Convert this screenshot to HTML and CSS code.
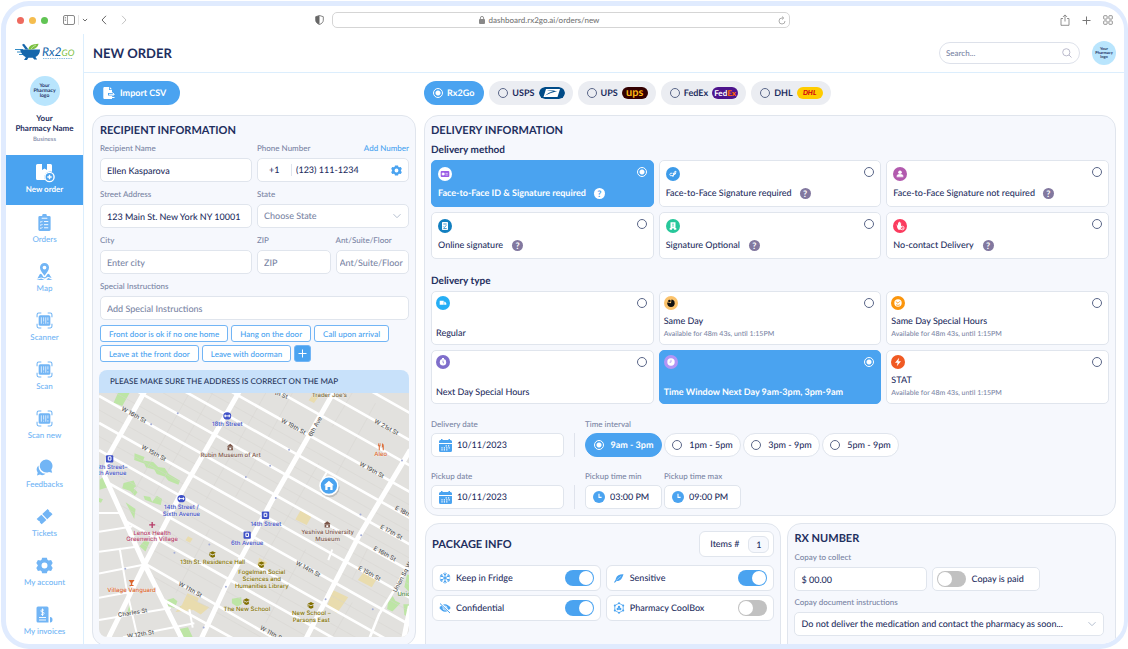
FILE: index.html
```html
<!DOCTYPE html>
<html lang="en">
<head>
<meta charset="utf-8">
<meta name="viewport" content="width=device-width, initial-scale=1">
<title>Rx2Go – New order</title>
<link rel="stylesheet" href="styles.css">
</head>
<body>
<svg class="defs" aria-hidden="true">
  <symbol id="scan" viewBox="0 0 16 16"><path d="M1 5V2.500Q1 1 2.500 1H5M11 1h2.500Q15 1 15 2.500V5M15 11v2.500q0 1.500-1.500 1.500H11M5 15H2.500Q1 15 1 13.500V11" fill="none" stroke="currentColor"/><rect x="2.500" y="3" width="11" height="10" rx="1.500" fill="currentColor"/><path d="M5 5v6M7.200 5v4M9.200 5v6M11.200 5v3M11.200 9.500V11M7.200 10v1" stroke="#fff" stroke-width=".7"/></symbol>
  <symbol id="gear" viewBox="0 0 16 16"><path fill="currentColor" fill-rule="evenodd" d="M5.800.6h4.400l.7 2.200 1.100.6 2.200-.5 1.500 2.700L14.200 8l1.500 2.400-1.500 2.700-2.200-.5-1.100.6-.7 2.200H5.800l-.7-2.200-1.100-.6-2.200.5-1.500-2.700L1.800 8 .3 5.600l1.500-2.700 2.200.5 1.100-.6zM8 5.200a2.800 2.800 0 1 0 0 5.600 2.800 2.800 0 0 0 0-5.600z"/></symbol>
  <symbol id="calendar" viewBox="0 0 13 13"><path fill="#4aa3f0" d="M1.500 1H2V0h1.500v1h6V0H11v1h.5A1.500 1.500 0 0 1 13 2.500V4H0V2.500A1.500 1.500 0 0 1 1.500 1zM0 5h13v6.500a1.500 1.500 0 0 1-1.500 1.500h-10A1.500 1.500 0 0 1 0 11.500z"/><path stroke="#fff" stroke-width="1.200" stroke-dasharray="1.200 1.200" d="M6.600 6.800h4.600M2.400 8.800h8.800M2.400 10.800h6"/></symbol>
  <symbol id="clock" viewBox="0 0 12 12"><circle cx="6" cy="6" r="6" fill="#4aa3f0"/><path d="M6 2.800V6.400h2.600" fill="none" stroke="#fff" stroke-width="1.100"/></symbol>
  <symbol id="chevron" viewBox="0 0 10 10"><path d="M1.500 3.200 5 6.700l3.500-3.500" fill="none" stroke="currentColor"/></symbol>
</svg>

<div class="window">
  <div class="titlebar">
    <div class="lights"><i class="red"></i><i class="yellow"></i><i class="green"></i></div>
    <div class="bar-tools">
      <svg width="12" height="10" viewBox="0 0 12 10"><rect x=".5" y=".5" width="11" height="9" rx="1.500" fill="none" stroke="#888"/><path d="M4.500 1v8M1.700 2.500h1.400M1.700 4h1.400M1.700 5.500h1.400" stroke="#888" stroke-width=".8"/></svg>
      <i class="bar-line"></i>
      <svg width="6" height="6" viewBox="0 0 10 10"><path d="M1.500 3.200 5 6.700l3.500-3.500" fill="none" stroke="#666" stroke-width="1.600"/></svg>
    </div>
    <div class="bar-nav">
      <svg width="8" height="10" viewBox="0 0 8 10"><path d="M6 .8 2 5l4 4.200" fill="none" stroke="#666"/></svg>
      <svg width="8" height="10" viewBox="0 0 8 10"><path d="m2 .8 4 4.200-4 4.200" fill="none" stroke="#c4c4c4"/></svg>
    </div>
    <div class="bar-center">
      <svg width="9" height="10" viewBox="0 0 9 10"><path d="M4.500.5 8.300 1.700v3.500c0 2-1.600 3.500-3.800 4.300C2.300 8.700.7 7.200.7 5.200V1.700z" fill="#fff" stroke="#666" stroke-width=".8"/><path d="M4.500.5v9C2.300 8.700.7 7.200.7 5.200V1.700z" fill="#666"/></svg>
      <div class="address">
        <span class="address-text"><svg width="6" height="8" viewBox="0 0 6 8"><rect y="3" width="6" height="5" rx="1" fill="#888"/><path d="M1.400 3.500V2a1.600 1.600 0 0 1 3.200 0v1.500" fill="none" stroke="#888" stroke-width=".9"/></svg>dashboard.rx2go.ai/orders/new</span>
        <svg width="8" height="9" viewBox="0 0 8 9"><path d="M7 5a3 3 0 1 1-3-3h1.500M4 .5 5.700 2 4 3.600" fill="none" stroke="#999" stroke-width=".8"/></svg>
      </div>
    </div>
    <div class="bar-right">
      <svg width="10" height="12" viewBox="0 0 10 12"><path d="M3 4.500H1v6.800h8V4.500H7M5 7.500V1M2.900 3 5 .9 7.100 3" fill="none" stroke="#777" stroke-width=".8"/></svg>
      <svg width="9" height="9" viewBox="0 0 9 9"><path d="M4.500.5v8M.5 4.500h8" stroke="#777"/></svg>
      <svg width="10" height="10" viewBox="0 0 10 10" fill="none" stroke="#777" stroke-width=".8"><rect x=".7" y=".7" width="3.400" height="3.400" rx=".6"/><rect x="5.900" y=".7" width="3.400" height="3.400" rx=".6"/><rect x=".7" y="5.900" width="3.400" height="3.400" rx=".6"/><rect x="5.900" y="5.900" width="3.400" height="3.400" rx=".6"/></svg>
    </div>
  </div>

  <div class="app">
    <aside class="sidebar">
      <svg class="logo" viewBox="0 0 62 18" role="img" aria-label="Rx2Go">
        <path d="M1 6.500h8M3 9h6M5 11.500h5" stroke="#1c7fc0" stroke-width=".9"/>
        <path d="M6 6.500h20c0 3.500-1.500 6-4.500 7.600l1.700 2.400h-3l-1.400-1.700h-4.400L13 17h-3l1.800-2.800C8.500 12.800 7.200 9.800 6 6.500z" fill="#1667ab"/>
        <path d="m8 1.800 2-1 4.500 5.700h-3z" fill="#1667ab"/>
        <path d="M14.500 6.500C14.500 3 18 1 24.500.8 24 4 21 6.500 17 6.500z" fill="#7cc142"/><path d="M17 6q2-3 5-4" stroke="#fff" stroke-width=".5" fill="none"/>
        <text x="28" y="13" class="logo-rx">Rx2<tspan class="logo-go">GO</tspan></text>
        <path d="M29 15.500h30" stroke="#7ab3dd" stroke-width=".9" stroke-dasharray="1.400 .9"/>
      </svg>
      <div class="avatar avatar-side">Your Pharmacy logo</div>
      <strong class="pharmacy">Your<br>Pharmacy Name</strong>
      <span class="plan">Business</span>
      <nav class="nav">
        <a href="#" class="nav-item active"><svg viewBox="0 0 20 20"><path fill="#fff" d="M2.500 1H7v6l2.500-1.500L12 7V1h3.500A1.500 1.500 0 0 1 17 2.500v6.300a5.700 5.700 0 0 0-6.800 8.200H2.500A1.500 1.500 0 0 1 1 15.500v-13A1.500 1.500 0 0 1 2.500 1z"/><circle cx="14.500" cy="14" r="4.600" fill="none" stroke="#fff" stroke-width="1.400"/><path d="M14.500 11.800v4.400M12.300 14h4.400" stroke="#fff" stroke-width="1.400"/></svg>New order</a>
        <a href="#" class="nav-item"><svg viewBox="0 0 16 18"><path fill="currentColor" d="M3 2h2.500a2.500 2.500 0 0 1 5 0H13a1.500 1.500 0 0 1 1.500 1.500v13A1.500 1.500 0 0 1 13 18H3a1.500 1.500 0 0 1-1.500-1.500v-13A1.500 1.500 0 0 1 3 2z"/><path d="M5 4.500h6M7.500 8h4.500M7.500 11.300h4.500M7.500 14.600h4.500M3.400 8l.9.900 1.500-1.600M3.400 11.300l.9.900 1.500-1.600M3.400 14.600l.9.900 1.500-1.600" fill="none" stroke="#fff"/></svg>Orders</a>
        <a href="#" class="nav-item"><svg viewBox="0 0 18 18"><path fill="currentColor" fill-rule="evenodd" d="M9 0a4.800 4.800 0 0 1 4.800 4.800C13.800 8 11 10.500 9 13.500 7 10.500 4.200 8 4.200 4.800A4.800 4.800 0 0 1 9 0zm0 2.800a2 2 0 1 0 0 4 2 2 0 0 0 0-4z"/><path fill="currentColor" d="M4.300 11.500 6 12l2 3h2l2-3 1.700-.5L16.500 16l-4-1.500-3 2-4-1.200-4 1.200zM.5 18l5-1.500L9 18zM11 17.700l2-1.700 4.500 2z"/></svg>Map</a>
        <a href="#" class="nav-item"><svg><use href="#scan"/></svg>Scanner</a>
        <a href="#" class="nav-item"><svg><use href="#scan"/></svg>Scan</a>
        <a href="#" class="nav-item"><svg><use href="#scan"/></svg>Scan new</a>
        <a href="#" class="nav-item"><svg viewBox="0 0 17 17"><path fill="currentColor" d="M10 .5a6.500 6.500 0 0 1 5.300 10.200l.9 3-3.200-.8A6.500 6.500 0 1 1 10 .5z"/><path fill="currentColor" d="M2.600 6.500a7.400 7.400 0 0 0 6.900 8.300A5 5 0 0 1 4 15.600l-3 .9.700-3a5 5 0 0 1 .9-7z"/></svg>Feedbacks</a>
        <a href="#" class="nav-item"><svg viewBox="0 0 18 18"><path fill="currentColor" d="m12.300 1 1.800 1.900q-.4 1.700 1.400 1.700L17.500 6.600l-5.600 5.200-5.300-5.400zM5.700 7.200l5.300 5.400-5 4.600-1.900-1.900q.5-1.800-1.500-1.800L.7 11.700z"/></svg>Tickets</a>
        <a href="#" class="nav-item"><svg><use href="#gear"/></svg>My account</a>
        <a href="#" class="nav-item"><svg viewBox="0 0 17 17"><path fill="currentColor" d="M2 .5h9a1.500 1.500 0 0 1 1.500 1.500v14.500H2A1.500 1.500 0 0 1 .5 15V2A1.500 1.500 0 0 1 2 .5zM14 16.500V11q2.500 0 2.500 2.800T14 16.500z"/><path d="M8 4.200Q5 3 5 4.700T6.600 6.200 8 7.700 5 8.200M6.500 2.500V10M3 11.500h7M3 14h7" fill="none" stroke="#fff" stroke-width=".9"/></svg>My invoices</a>
      </nav>
    </aside>

    <div class="page">
      <header class="header">
        <h1>NEW ORDER</h1>
        <label class="search"><input type="search" placeholder="Search..." aria-label="Search"><svg width="10" height="10" viewBox="0 0 10 10"><circle cx="4.300" cy="4.300" r="3.600" fill="none" stroke="#bbc"/><path d="m7 7 2.500 2.500" stroke="#bbc"/></svg></label>
        <div class="avatar avatar-head">Your Pharmacy logo</div>
      </header>

      <main class="main">
        <section class="column">
          <div class="toolbar"><button type="button" class="import"><svg width="12" height="12" viewBox="0 0 12 12"><path fill="#fff" d="M1.500 0H6v3h3v3H5v2.500h4V12H1.500A1.200 1.200 0 0 1 .3 10.800V1.200A1.200 1.200 0 0 1 1.500 0zM6.800 0 9 2.300H6.800z"/><path d="M6 7.300h5M9.200 5.300l2 2-2 2M8 10.500h3.500" stroke="#fff" fill="none"/></svg>Import CSV</button></div>
          <form class="card recipient">
            <h2>RECIPIENT INFORMATION</h2>
            <div class="fields">
              <div class="field half"><label for="name">Recipient Name</label><input class="box" id="name" value="Ellen Kasparova"></div>
              <div class="field half">
                <div class="label-row"><label for="phone">Phone Number</label><a href="#">Add Number</a></div>
                <div class="box phone"><span class="code">+1</span><input id="phone" value="(123) 111-1234"><svg width="11" height="11" color="#4aa3f0"><use href="#gear"/></svg></div>
              </div>
              <div class="field half"><label for="street">Street Address</label><input class="box" id="street" value="123 Main St. New York NY 10001"></div>
              <div class="field half"><label for="state">State</label><div class="box select muted"><select id="state"><option>Choose State</option></select><svg width="10" height="10"><use href="#chevron"/></svg></div></div>
              <div class="field half"><label for="city">City</label><input class="box" id="city" placeholder="Enter city"></div>
              <div class="field"><label for="zip">ZIP</label><input class="box" id="zip" placeholder="ZIP"></div>
              <div class="field"><label for="apt">Ant/Suite/Floor</label><input class="box" id="apt" placeholder="Ant/Suite/Floor"></div>
              <div class="field full"><label for="special">Special Instructions</label><input class="box" id="special" placeholder="Add Special Instructions"></div>
            </div>
            <div class="chips">
              <button type="button">Front door is ok if no one home</button><button type="button">Hang on the door</button><button type="button">Call upon arrival</button><button type="button">Leave at the front door</button><button type="button">Leave with doorman</button><button type="button" class="add" aria-label="Add instruction"><svg width="9" height="9" viewBox="0 0 9 9"><path d="M4.500.5v8M.5 4.500h8" stroke="#fff"/></svg></button>
            </div>
            <div class="map">
              <p>PLEASE MAKE SURE THE ADDRESS IS CORRECT ON THE MAP</p>
              <svg viewBox="18 9 933 735" preserveAspectRatio="xMidYMid slice">
                <defs><clipPath id="grid"><path d="M18-50H960V760H270L155 525 35 260 18 240z"/></clipPath></defs>
                <rect x="0" y="0" width="970" height="760" fill="#e2e1de"/>
                <g fill="#bde5a5">
                  <path d="M75 9h35L88 48 62 38z"/><path d="m125 190 30 12-4 10 30 5 15 15 20 3 12 18 34 20-5 12-30-12-10-12-25-8-8-14-24-6-6-12-30-10z"/><path d="m92 280 30-8 8 18-8 6 12 12-8 10-14-14-24-8zM152 318l20 4 6 14 14-18 16 10-4 18-22-6-26-10zM98 338l30 20-4 30zM18 325l12 4-6 10-6-2zM20 270l12-10 14 32-26 8zM140 470l15-18 15 6-12 28zM222 632l20-6 12 10-8 20-20-6zM260 650h28l-14 16zM256 720l30-6 14 30h-34zM418 628l28-4 2 20-14 8-16-10zM110 645l8 24-16 6zM945 555l6 2v50l-14-14zM888 640l14-20 8 14 15 8-24 25-16-8zM934 645h17v40l-14-8z"/>
                </g>
                <g fill="#e9dcae">
                  <path d="m625 362 34 16-16 28-34-16zM722 602l46 22-34 48-30-20zM815 548l38 22-14 24-42-22zM284 612l34 14-4 12 36 16-26 22-22-14-54 6 20-22zM286 440l14 8-8 12-14-8zM500 505l24 14-16 18-14-10zM665 9l20 2-20 28-16-8z"/>
                </g>
                <g stroke="#d6d5d1" stroke-width="1.500" clip-path="url(#grid)">
                  <path d="m18-180 933 525M18-100l933 525M18-20l933 525M18 60l933 525M18 140l933 525M18 225l933 525M18 310l800 450M18 390l660 371M18 470l500 281M290 9 118 315M360 9 185 315M520 9 340 330M600 9 430 320M680 220 500 530M850 40 690 330M780 9 720 110M640 480 520 700M350 420 250 610M830 470 780 570M780 640 720 744"/>
                </g>
                <g stroke="#fff" stroke-width="8" fill="none">
                  <g clip-path="url(#grid)"><path d="m18-457 950 534M18-375l950 534M18-299l950 534M18-219l950 534M18-141l950 534M18-61l950 534M18 18l950 534M18 99l950 534M18 181l950 534M18 264l870 489M18 350l720 405M155 522l390 225M200 625l220 122"/></g>
                  <path stroke-width="6" d="M18 370h62M18 427l100-16M18 487l112-15M18 552l137-27M18 625l110-20M18 692l216-36M90 744l215-42M80 475l22 130 32 139M290 660l10 55M705 245 690 270M720 480l-12 32"/>
                  <path d="m951 520-40 75-50 80-28 70"/>
                </g>
                <g stroke="#fff" stroke-width="15" fill="none"><path d="M155 5 48 195 35 260 155 525 268 750M440 5 265 310 155 525 45 750M725 5 540 330 400 590 325 750M955 180 800 440 640 750M955 650l-20 100"/></g>
                <g fill="#a3add8"><circle cx="255" cy="70" r="3"/><circle cx="590" cy="180" r="3"/><circle cx="460" cy="262" r="3"/><circle cx="550" cy="325" r="3"/><circle cx="245" cy="490" r="3"/><circle cx="350" cy="465" r="3"/><circle cx="400" cy="592" r="3"/><circle cx="533" cy="228" r="3"/><circle cx="807" cy="437" r="3"/><circle cx="700" cy="630" r="3"/><circle cx="333" cy="715" r="3"/><circle cx="842" cy="660" r="3"/><circle cx="97" cy="538" r="3"/><circle cx="175" cy="103" r="3"/><circle cx="805" cy="375" r="3"/><circle cx="930" cy="212" r="3"/></g>
                <g class="street">
                  <text transform="translate(120 80) rotate(29)">W 16th St</text><text transform="translate(180 195) rotate(29)">W 15th St</text><text transform="translate(600 115) rotate(29)">W 19th St</text><text transform="translate(880 117) rotate(29)">W 21st St</text><text transform="translate(836 246) rotate(29)">W 19th St</text><text transform="translate(674 113) rotate(-61)">6th Ave</text><text transform="translate(940 376) rotate(29)">E 18th St</text><text transform="translate(895 433) rotate(29)">E 17th St</text><text transform="translate(875 498) rotate(29)">E 16th St</text><text transform="translate(829 557) rotate(29)">E 15th St</text><text transform="translate(644 544) rotate(29)">W 14th St</text><text transform="translate(290 606) rotate(29)">W 11th St</text><text transform="translate(535 738) rotate(29)">W 11th St</text><text transform="translate(120 676) rotate(-9)">Charles St</text><text transform="translate(144 741) rotate(-9)">W 12th St</text><text transform="translate(936 566) rotate(-62)">Union Sq W</text><text x="565" y="20" transform="rotate(20 565 20)">th St</text>
                </g>
                <g class="poi">
                  <g fill="#3f51c7"><text x="404" y="108">18th Street</text><text x="52" y="238">14th Street–</text><text x="52" y="257">8th Avenue</text><text x="266" y="358">14th Street /</text><text x="266" y="378">Sixth Avenue</text><text x="520" y="408">14th Street</text><text x="464" y="467">6th Avenue</text>
                    <ellipse cx="404" cy="78" rx="12" ry="11"/><ellipse cx="266" cy="327" rx="12" ry="11"/><rect x="39" y="196" width="22" height="22" rx="3"/><rect x="508" y="366" width="22" height="22" rx="3"/><rect x="453" y="426" width="22" height="22" rx="3"/></g>
                  <g fill="none" stroke="#fff" stroke-width="3"><path d="M395 78h18M257 327h18M398 74v8M410 74v8M260 323v8M272 323v8"/><path d="M46 201h8v10h-8zM515 371h8v10h-8zM460 431h8v10h-8z"/></g>
                  <g fill="#7a5548"><text x="414" y="201">Rubin Museum of Art</text><text x="706" y="434">Yeshiva University</text><text x="706" y="454">Museum</text><path d="m404 169 9-7 9 7v2h-18zM405 172h16v9h-16zM696 402l9-7 9 7v2h-18zM697 405h16v9h-16z"/></g><path d="M410 174h6v5h-6zM702 407h6v5h-6z" fill="#fff"/>
                  <g fill="#dd652d"><text x="866" y="198">Aleo</text><text x="116" y="609">Village Vanguard</text><path d="M859 160h2v6h2v-6h2v8l-2 2v11h-3v-11l-2-2zM870 160q5 0 5 8v13h-3v-9h-2zM107 572h18l-7 9v6h4v3h-12v-3h4v-6z"/></g>
                  <g fill="#b53a67"><text x="178" y="435">Lenox Health</text><text x="178" y="454">Greenwich Village</text><path d="M176 397h4v7h7v4h-7v7h-4v-7h-7v-4h7z"/></g>
                  <g fill="#827000"><text x="360" y="523">13th St. Residence Hall</text><text x="508" y="555">Fogelman Social</text><text x="508" y="575">Sciences and</text><text x="508" y="595">Humanities Library</text><text x="463" y="665">The New School</text><text x="657" y="677">New School –</text><text x="657" y="697">Parsons East</text><path id="cap" d="m350 490 10-5 10 5-10 5zM353 494l7 4 7-4v8l-7 3-7-3zM350 491v8h2v-7z"/><use href="#cap" x="147" y="31"/><use href="#cap" x="102" y="142"/><use href="#cap" x="296" y="153"/></g>
                  <text x="711" y="22" fill="#7a6a40">Trader Joe’s</text><text x="955" y="621" fill="#4c8a3e">Union Sq</text>
                </g>
                <circle cx="712" cy="293" r="30" fill="#000" opacity=".15"/><circle cx="710" cy="288" r="27" fill="#4aa3f0" stroke="#fff" stroke-width="5"/><path fill="#fff" d="m710 273 15 14h-4v14h-7v-9h-8v9h-7v-14h-4z"/>
              </svg>
            </div>
          </form>
        </section>

        <section class="column">
          <div class="toolbar carriers">
            <label class="pill on"><input type="radio" name="carrier" checked>Rx2Go</label>
            <label class="pill"><input type="radio" name="carrier">USPS <svg class="brand" viewBox="0 0 26 12"><rect width="26" height="12" rx="6" fill="#004b87"/><path d="M7 2h14l-2.500 8H4.500z" fill="#fff"/><path d="M8 3.200c5 .3 8 0 10.500 1.400C15 4.500 9 7 5.500 9.300c3-3.300 6-4.100 9-4.700-2-.6-4.500-.4-6.500-1.400z" fill="#004b87"/></svg></label>
            <label class="pill"><input type="radio" name="carrier">UPS <span class="brand ups">ups</span></label>
            <label class="pill"><input type="radio" name="carrier">FedEx <span class="brand fedex">Fed<b>Ex</b></span></label>
            <label class="pill"><input type="radio" name="carrier">DHL <span class="brand dhl">DHL</span></label>
          </div>

          <form class="card delivery">
            <h2>DELIVERY INFORMATION</h2>
            <h3>Delivery method</h3>
            <div class="options methods">
              <label class="option on"><span class="top"><svg viewBox="0 0 14 14"><circle cx="7" cy="7" r="7" fill="#fff"/><rect x="2.700" y="4" width="8.600" height="6" rx="1" fill="#9b5de5"/><path d="M4.200 6h2v2h-2zM7.500 6.400h2.300M7.500 8h2.300" stroke="#fff" stroke-width=".6" fill="#fff"/></svg><input type="radio" name="method" checked></span><span class="title">Face-to-Face ID &amp; Signature required<i class="help">?</i></span></label>
              <label class="option"><span class="top"><svg viewBox="0 0 14 14"><circle cx="7" cy="7" r="7" fill="#3d9be9"/><path d="M6.500 6.300Q4 5.500 3.800 7.500T7 8.500 10 4.200Q8.300 4 7.800 6.500L6.800 10M7 6.600h2.800" fill="none" stroke="#fff" stroke-width=".9"/></svg><input type="radio" name="method"></span><span class="title">Face-to-Face Signature required<i class="help">?</i></span></label>
              <label class="option"><span class="top"><svg viewBox="0 0 14 14"><circle cx="7" cy="7" r="7" fill="#b25aae"/><circle cx="7" cy="5.200" r="1.800" fill="#fff"/><path d="M4 9.200q0-1.700 1.800-1.700h2.400q1.800 0 1.800 1.700zM3.600 9.800h6.800" fill="#fff" stroke="#fff" stroke-width=".7"/></svg><input type="radio" name="method"></span><span class="title">Face-to-Face Signature not required<i class="help">?</i></span></label>
              <label class="option"><span class="top"><svg viewBox="0 0 14 14"><circle cx="7" cy="7" r="7" fill="#127fc0"/><rect x="4" y="3" width="6" height="8" rx=".8" fill="#fff"/><path d="M5.300 5h3.400M5.300 7.500l1 1 2-2.200M5.300 9.600h3.400" stroke="#127fc0" stroke-width=".8" fill="none"/></svg><input type="radio" name="method"></span><span class="title">Online signature<i class="help far">?</i></span></label>
              <label class="option"><span class="top"><svg viewBox="0 0 14 14"><circle cx="7" cy="7" r="7" fill="#27c79a"/><path d="M4.500 3.200h5V9h.8v1.800H8V9.500H6v1.300H3.700V9h.8z" fill="#fff"/><path d="M6 5.200h2M6 7h2" stroke="#27c79a" stroke-width=".7"/></svg><input type="radio" name="method"></span><span class="title">Signature Optional<i class="help far">?</i></span></label>
              <label class="option"><span class="top"><svg viewBox="0 0 14 14"><circle cx="7" cy="7" r="7" fill="#fb3b5e"/><path d="M4 5.200 5 7V3.600h.9V6l.1-3.200h.9L7 6l.3-2.600h.8V7l1 .6-1.600 3.200H5.500Q4 9.500 3.600 5.600z" fill="#fff"/><circle cx="9.300" cy="9" r="1.800" fill="#fb3b5e" stroke="#fff" stroke-width=".8"/><path d="m8.300 8 2 2" stroke="#fff" stroke-width=".7"/></svg><input type="radio" name="method"></span><span class="title">No-contact Delivery<i class="help far">?</i></span></label>
            </div>
            <h3 class="second">Delivery type</h3>
            <div class="options types">
              <label class="option"><span class="top"><svg viewBox="0 0 14 14"><circle cx="7" cy="7" r="7" fill="#25aef5"/><path d="M3.700 4.800h4v1h1.400l1.200 1.400v1.600H3.700z" fill="#fff"/><path d="M7.900 5.800v3" stroke="#25aef5" stroke-width=".5"/></svg><input type="radio" name="type"></span><span class="title">Regular</span></label>
              <label class="option"><span class="top"><svg viewBox="0 0 14 14"><circle cx="7" cy="7" r="7" fill="#fbc26b"/><circle cx="7" cy="7.200" r="3.700" fill="#111"/><path d="M7 7.200 3 6.200 4.500 2.600 7.500 3z" fill="#fbc26b"/><circle cx="5.400" cy="5" r="1.300" fill="#111"/></svg><input type="radio" name="type"></span><span class="title">Same Day</span><small>Available for 48m 43s, until 1:15PM</small></label>
              <label class="option"><span class="top"><svg viewBox="0 0 14 14"><circle cx="7" cy="7" r="7" fill="#fb950c"/><circle cx="7" cy="7" r="3.700" fill="#fff"/><path d="m4.800 5.500 2.200 1.700 2-2M5 8.800q2 1.200 4 0" fill="none" stroke="#fb950c" stroke-width=".8"/></svg><input type="radio" name="type"></span><span class="title">Same Day Special Hours</span><small>Available for 48m 43s, until 1:15PM</small></label>
              <label class="option"><span class="top"><svg viewBox="0 0 14 14"><circle cx="7" cy="7" r="7" fill="#7f6ecb"/><path d="M6 3h2v1H6z" fill="#fff"/><circle cx="7" cy="7.300" r="3.200" fill="#fff"/><path d="M7 5.500v2l1 .6" fill="none" stroke="#7f6ecb" stroke-width=".8"/></svg><input type="radio" name="type"></span><span class="title">Next Day Special Hours</span></label>
              <label class="option on"><span class="top"><svg viewBox="0 0 14 14"><circle cx="7" cy="7" r="7" fill="#b295f5"/><circle cx="7" cy="7" r="3.700" fill="#fff"/><path d="M7 4.800V7.200H5.500" fill="none" stroke="#b295f5" stroke-width=".8"/></svg><input type="radio" name="type" checked></span><span class="title">Time Window Next Day 9am-3pm, 3pm-9am</span></label>
              <label class="option"><span class="top"><svg viewBox="0 0 14 14"><circle cx="7" cy="7" r="7" fill="#f05a23"/><path d="M8.200 2.800 4 7.700h2.600L5.800 11.200 10 6.300H7.400z" fill="#fff"/></svg><input type="radio" name="type"></span><span class="title">STAT</span><small>Available for 48m 43s, until 1:15PM</small></label>
            </div>
            <div class="schedule">
              <div class="field date"><label for="ddate">Delivery date</label><div class="box"><svg width="13" height="13"><use href="#calendar"/></svg><input id="ddate" value="10/11/2023"></div></div>
              <fieldset class="field interval"><legend>Time interval</legend><div class="slots">
                <label class="slot on"><input type="radio" name="slot" checked>9am - 3pm</label><label class="slot"><input type="radio" name="slot">1pm - 5pm</label><label class="slot"><input type="radio" name="slot">3pm - 9pm</label><label class="slot"><input type="radio" name="slot">5pm - 9pm</label></div></fieldset>
            </div>
            <div class="schedule">
              <div class="field date"><label for="pdate">Pickup date</label><div class="box"><svg width="13" height="13"><use href="#calendar"/></svg><input id="pdate" value="10/11/2023"></div></div>
              <div class="interval slots">
                <div class="field time"><label for="tmin">Pickup time min</label><div class="box"><svg width="12" height="12"><use href="#clock"/></svg><input id="tmin" value="03:00 PM"></div></div>
                <div class="field time"><label for="tmax">Pickup time max</label><div class="box"><svg width="12" height="12"><use href="#clock"/></svg><input id="tmax" value="09:00 PM"></div></div>
              </div>
            </div>
          </form>

          <div class="bottom">
            <form class="card package">
              <div class="package-head"><h2>PACKAGE INFO</h2><label class="items">Items #<input class="count" value="1"></label></div>
              <div class="switches">
                <label class="switch"><svg width="12" height="12" viewBox="0 0 12 12"><path d="M6 .5v11M1.200 3.200l9.600 5.600M1.200 8.800l9.600-5.600M4.300 1.500 6 3l1.700-1.500M4.300 10.500 6 9l1.700 1.500M.8 5l2.300-.7L2.700 2M11.200 7l-2.300.7.400 2.300M.8 7l2.300.7-.4 2.300M11.200 5l-2.300-.7.400-2.300" stroke="#4aa3f0" fill="none"/></svg>Keep in Fridge<input type="checkbox" class="toggle" checked></label>
                <label class="switch"><svg width="12" height="12" viewBox="0 0 12 12"><path d="M10.500 2.200C7.500 1.800 3.800 3 3 6.200L2.500 8 1 10.300l.8.500L3.600 9c3.900.2 5.500-2.600 6.900-6.800z" fill="#4aa3f0"/><path d="M3.300 8.300 8 4.300" stroke="#fff" stroke-width=".4"/></svg>Sensitive<input type="checkbox" class="toggle" checked></label>
                <label class="switch"><svg width="12" height="12" viewBox="0 0 12 12"><path d="M.3 6Q3 2.300 6 2.300T11.700 6Q9 9.700 6 9.700T.3 6z" fill="#4aa3f0"/><circle cx="6" cy="6" r="2" fill="none" stroke="#fff" stroke-width=".8"/><path d="m1.500 1.500 9.500 9" stroke="#fff" stroke-width="2"/><path d="m1 1.500 10 9.500" stroke="#4aa3f0"/></svg>Confidential<input type="checkbox" class="toggle" checked></label>
                <label class="switch"><svg width="12" height="12" viewBox="0 0 12 12"><path d="m6 1.200 4.200 2.400v4.800L6 10.800 1.800 8.400V3.600z" fill="none" stroke="#4aa3f0" stroke-width=".8"/><g fill="#4aa3f0"><circle cx="6" cy="1.200" r="1"/><circle cx="10.200" cy="3.600" r="1"/><circle cx="10.200" cy="8.400" r="1"/><circle cx="6" cy="10.800" r="1"/><circle cx="1.800" cy="8.400" r="1"/><circle cx="1.800" cy="3.600" r="1"/><circle cx="6" cy="4.900" r="1.200"/><circle cx="4.800" cy="7" r="1.200"/><circle cx="7.200" cy="7" r="1.200"/></g></svg>Pharmacy CoolBox<input type="checkbox" class="toggle"></label>
              </div>
            </form>
            <form class="card rx">
              <h2>RX NUMBER</h2>
              <div class="field"><label for="copay">Copay to collect</label>
                <div class="copay"><input class="box" id="copay" value="$ 00.00"><label class="box paid"><input type="checkbox" class="toggle">Copay is paid</label></div></div>
              <div class="field"><label for="instr">Copay document instructions</label><div class="box select wide"><select id="instr"><option>Do not deliver the medication and contact the pharmacy as soon...</option></select><svg width="10" height="10"><use href="#chevron"/></svg></div></div>
            </form>
          </div>
        </section>
      </main>
    </div>
  </div>
</div>
</body>
</html>
```

FILE: styles.css
```css
:root {
  --blue: #4aa3f0;
  --sky: #72b5f5;
  --navy: #1f2f5f;
  --grey: #7b86a5;
  --line: #e0e5ed;
  --panel: #f6f8fd;
}
* { box-sizing: border-box; }
body {
  margin: 0;
  background: #fff;
  color: var(--navy);
  font: 500 9px/12px Lato, "Open Sans", sans-serif;
  text-rendering: geometricPrecision;
}
h1, h2, h3, p { margin: 0; }
a { color: var(--blue); text-decoration: none; }
input, select, button { font: inherit; color: inherit; margin: 0; min-width: 0; text-rendering: inherit; }
input:not([type=radio]):not([type=checkbox]), select { border: 0; padding: 0; background: none; outline: 0; }
input::placeholder { color: var(--grey); opacity: 1; }
svg { display: block; flex: none; }
form { margin: 0; }
.defs { position: absolute; width: 0; height: 0; }

.window {
  margin: 1px 0 0 1px;
  height: calc(100vh - 1px);
  border: 5px solid #e0ebfe;
  border-right-width: 4px;
  border-radius: 28px;
  background: #fff;
  overflow: hidden;
  display: flex;
  flex-direction: column;
}

/* Browser bar */
.titlebar { flex: none; height: 28px; display: flex; align-items: center; padding: 0 11px; }
.lights { display: flex; gap: 5px; }
.lights i { width: 7px; height: 7px; border-radius: 50%; }
.red { background: #ee6a5f; }
.yellow { background: #f5bd4f; }
.green { background: #61c454; }
.bar-tools { display: flex; align-items: center; gap: 3px; margin-left: 15px; }
.bar-line { width: 1px; height: 10px; background: #e4e4e4; }
.bar-nav { display: flex; gap: 12px; margin-left: 12px; }
.bar-center { flex: 1; display: flex; align-items: center; gap: 8px; margin: 0 270px 0 187px; }
.address { flex: 1; height: 16px; border: 1px solid #d5d5d5; border-radius: 5px; display: flex; align-items: center; padding: 0 3px; }
.address-text { flex: 1; display: flex; align-items: center; justify-content: center; gap: 4px; padding-right: 36px; font-size: 8px; color: #777; }
.bar-right { display: flex; align-items: center; gap: 12px; }

.app { flex: 1; min-height: 0; display: flex; }

/* Sidebar */
.sidebar { flex: none; width: 78px; border-right: 1px solid #dceefd; display: flex; flex-direction: column; align-items: center; padding-top: 9px; }
.logo { width: 62px; height: 18px; }
.logo-rx { font: italic 12px Lato, sans-serif; fill: #1667ab; }
.logo-go { font-size: 9px; fill: #7cc142; }
.avatar { border-radius: 50%; background: #b9e5fd; display: flex; align-items: center; text-align: center; font-weight: 700; flex: none; }
.avatar-side { width: 30px; height: 30px; margin: 15px 0 7px; font-size: 5px; line-height: 5px; justify-content: center; }
.avatar-head { width: 24px; height: 24px; font-size: 4px; line-height: 4px; justify-content: center; }
.pharmacy { text-align: center; font-size: 8px; line-height: 10px; }
.plan { font-size: 6px; line-height: 8px; color: var(--grey); margin: 3px 0 11px; }
.nav { width: 100%; display: flex; flex-direction: column; }
.nav-item { flex: none; height: 49px; display: flex; flex-direction: column; align-items: center; justify-content: flex-start; padding-top: 9px; gap: 2px; font-size: 8px; color: var(--sky); }
.nav-item svg { width: 17px; height: 17px; }
.nav-item.active { height: 50px; padding-top: 8px; gap: 0; background: var(--blue); color: #fff; font-weight: 700; }
.nav-item.active svg { width: 20px; height: 20px; }

/* Page header */
.page { flex: 1; min-width: 0; display: flex; flex-direction: column; }
.header { flex: none; height: 39px; border-bottom: 1px solid #dceefd; display: flex; align-items: center; gap: 12px; padding: 0 8px 0 9px; }
.header h1 { flex: 1; font-size: 13px; line-height: 16px; }
.search { width: 141px; height: 22px; border: 1px solid #dde1ea; border-radius: 11px; display: flex; align-items: center; padding: 0 7px 0 6px; font-size: 8px; }
.search input { flex: 1; appearance: none; }

.main { flex: 1; min-height: 0; overflow: hidden; display: grid; grid-template-columns: 324fr 692fr; align-items: start; gap: 8px; padding: 8px 8px 0 8px; }
.column { min-width: 0; display: flex; flex-direction: column; }
.toolbar { height: 24px; margin-bottom: 10px; display: flex; gap: 5px; }
.import { border: 0; border-radius: 12px; background: var(--blue); color: #fff; font-weight: 700; display: flex; align-items: center; gap: 5px; padding: 0 14px 0 10px; margin-left: 1px; }
.card { background: var(--panel); border: 1px solid var(--line); border-radius: 14px; padding: 7px 6px; }
.recipient { padding: 7px 6px 8px 7px; }
h2 { font-size: 11px; line-height: 15px; }
h3 { font-size: 10px; line-height: 15px; margin: 5px 0 2px; }
h3.second { margin-top: 15px; }

/* Fields */
.fields { display: grid; grid-template-columns: repeat(4, 1fr); gap: 6px 5px; margin-top: 4px; }
.field { min-width: 0; display: flex; flex-direction: column; gap: 4px; }
.half { grid-column: span 2; }
.full { grid-column: span 4; }
.field > label, .label-row, legend { font-size: 8px; line-height: 12px; color: var(--grey); }
.label-row { display: flex; justify-content: space-between; }
.box, input.box:not([type=radio]):not([type=checkbox]) { width: 100%; height: 24px; background: #fff; border: 1px solid var(--line); border-radius: 5px; padding: 0 6px; }
div.box, label.box { display: flex; align-items: center; }
.box > input:not([type=checkbox]), .box > select { flex: 1; width: 0; }
.box > select { appearance: none; }
input#apt.box:not([type=radio]):not([type=checkbox]) { padding: 0 1px 0 3px; }
.muted { color: var(--grey); }
.select svg { color: #b5bfd0; }
.phone .code { width: 28px; padding-left: 5px; margin-right: 4px; border-right: 1px solid var(--line); }

.chips { display: flex; flex-wrap: wrap; gap: 3px; margin: 5px 0 8px; }
.chips button { height: 17px; border: 1px solid var(--sky); border-radius: 3px; background: #fff; color: var(--blue); font-size: 8px; line-height: 10px; padding: 0 8px; }
.chips .add { width: 17px; padding: 0; background: var(--blue); display: grid; place-items: center; }

.map { border-radius: 8px; overflow: hidden; margin-left: -1px; }
.map p { height: 23px; line-height: 23px; padding-left: 11px; background: #c8e1fa; font-size: 8px; color: #27365c; }
.map svg { width: 100%; aspect-ratio: 933 / 735; }
.street text { font: 500 18px Inter, sans-serif; text-anchor: middle; fill: #555; stroke: #f4f4f2; stroke-width: 2px; paint-order: stroke; }
.poi text { font: 500 18px Inter, sans-serif; text-anchor: middle; stroke: #f1f0ee; stroke-width: 2px; paint-order: stroke; }

/* Radios and toggles */
input[type=radio] { appearance: none; flex: none; width: 10px; height: 10px; border: 1px solid #5a6688; border-radius: 50%; background: #fff; }
input[type=radio]:checked { border-color: #fff; background: radial-gradient(circle, #fff 0 2px, var(--blue) 3px); }
.toggle { appearance: none; flex: none; width: 29px; height: 16px; border-radius: 8px; background: #c1c1c1; padding: 1px; display: flex; }
.toggle::before { content: ""; width: 14px; height: 14px; border-radius: 50%; background: #fff; }
.toggle:checked { background: var(--blue); justify-content: flex-end; }

.pill { height: 24px; border-radius: 12px; background: #ebedf2; display: flex; align-items: center; padding: 0 8px 0 9px; gap: 4px; font-weight: 700; }
.pill.on { padding-right: 10px; }
.pill input[type=radio] { background: transparent; }
.pill.on input[type=radio] { background: radial-gradient(circle, #fff 0 2px, var(--blue) 3px); }
.on { background: var(--blue); color: #fff; font-weight: 700; }
.brand { width: 26px; height: 12px; border-radius: 6px; text-align: center; overflow: hidden; }
.ups { background: #330000; color: #fdb913; font-size: 11px; line-height: 11px; }
.fedex { background: #4d148c; color: #fff; font-size: 8px; }
.fedex b { color: #ff6200; }
.dhl { background: #ffcc00; color: #d40511; font-size: 7px; font-weight: 900; font-style: italic; }

/* Delivery options */
.options { display: grid; grid-template-columns: repeat(3, 1fr); gap: 5px; }
.option { min-width: 0; border: 1px solid var(--line); border-radius: 5px; background: #fff; display: flex; flex-direction: column; }
.option.on, .slot.on { background: var(--blue); border-color: var(--blue); }
.top { display: flex; justify-content: space-between; }
.top svg { width: 14px; height: 14px; }
.title { display: flex; align-items: center; white-space: nowrap; }
.methods .option { height: 47px; padding: 6px; gap: 6px; }
.types .option { height: 54px; padding: 4px 6px 5px 4px; }
.types .top { align-items: center; }
.types .title { margin-top: auto; }
.types small { font-size: 7px; line-height: 10px; margin-top: 2px; color: var(--grey); }
.help { width: 11px; height: 11px; border-radius: 50%; background: #82789f; color: #fff; font: 700 9px/11px Lato, sans-serif; text-align: center; margin-left: 8px; }
.help.far { margin-left: 9px; }
.on .help { background: #fff; color: var(--blue); }

.schedule { display: flex; gap: 10px; margin-top: 14px; }
.schedule + .schedule { margin-top: 13px; }
.schedule .field { gap: 3px; }
.date { width: 133px; }
.date .box, .time .box { gap: 5px; padding: 0 7px; }
.interval { position: relative; padding: 0 0 0 11px; margin: 0; border: 0; }
.interval::before { content: ""; position: absolute; left: 0; bottom: 0; width: 1px; height: 24px; background: #dfe3ec; }
legend { padding: 0; margin-bottom: 3px; }
.slots { display: flex; gap: 2px; }
.slot { height: 24px; width: 77px; border: 1px solid var(--line); border-radius: 12px; background: #fff; display: flex; align-items: center; justify-content: center; gap: 7px; white-space: nowrap; }
.time { width: 77px; }

/* Bottom cards */
.delivery { padding-bottom: 6px; margin-bottom: 7px; }
.bottom { display: grid; grid-template-columns: 357fr 329fr; gap: 6px; margin-left: 1px; }
.bottom .card { padding-bottom: 32px; }
.package-head { display: flex; align-items: center; justify-content: space-between; margin-bottom: 8px; }
.items { height: 26px; border: 1px solid var(--line); border-radius: 6px; background: #fff; display: flex; align-items: center; gap: 9px; padding: 0 4px 0 10px; }
.items input.count:not([type=radio]):not([type=checkbox]) { width: 21px; height: 17px; border: 1px solid var(--line); border-radius: 6px; background: var(--panel); text-align: center; }
.switches { display: grid; grid-template-columns: 1fr 1fr; gap: 4px 5px; }
.switch { height: 26px; border: 1px solid var(--line); border-radius: 6px; background: #fff; display: flex; align-items: center; gap: 5px; padding: 0 6px; }
.switch .toggle { margin-left: auto; }
.rx .field { gap: 4px; }
.rx h2 { margin-bottom: 5px; }
.rx .field + .field { margin-top: 5px; }
.copay { display: flex; gap: 5px; }
.copay input.box:not([type=radio]):not([type=checkbox]) { width: 133px; }
.copay .paid { width: 108px; gap: 5px; padding: 0 4px; font-size: 9px; color: var(--navy); }
.rx .wide { width: 310px; max-width: 100%; }
```
